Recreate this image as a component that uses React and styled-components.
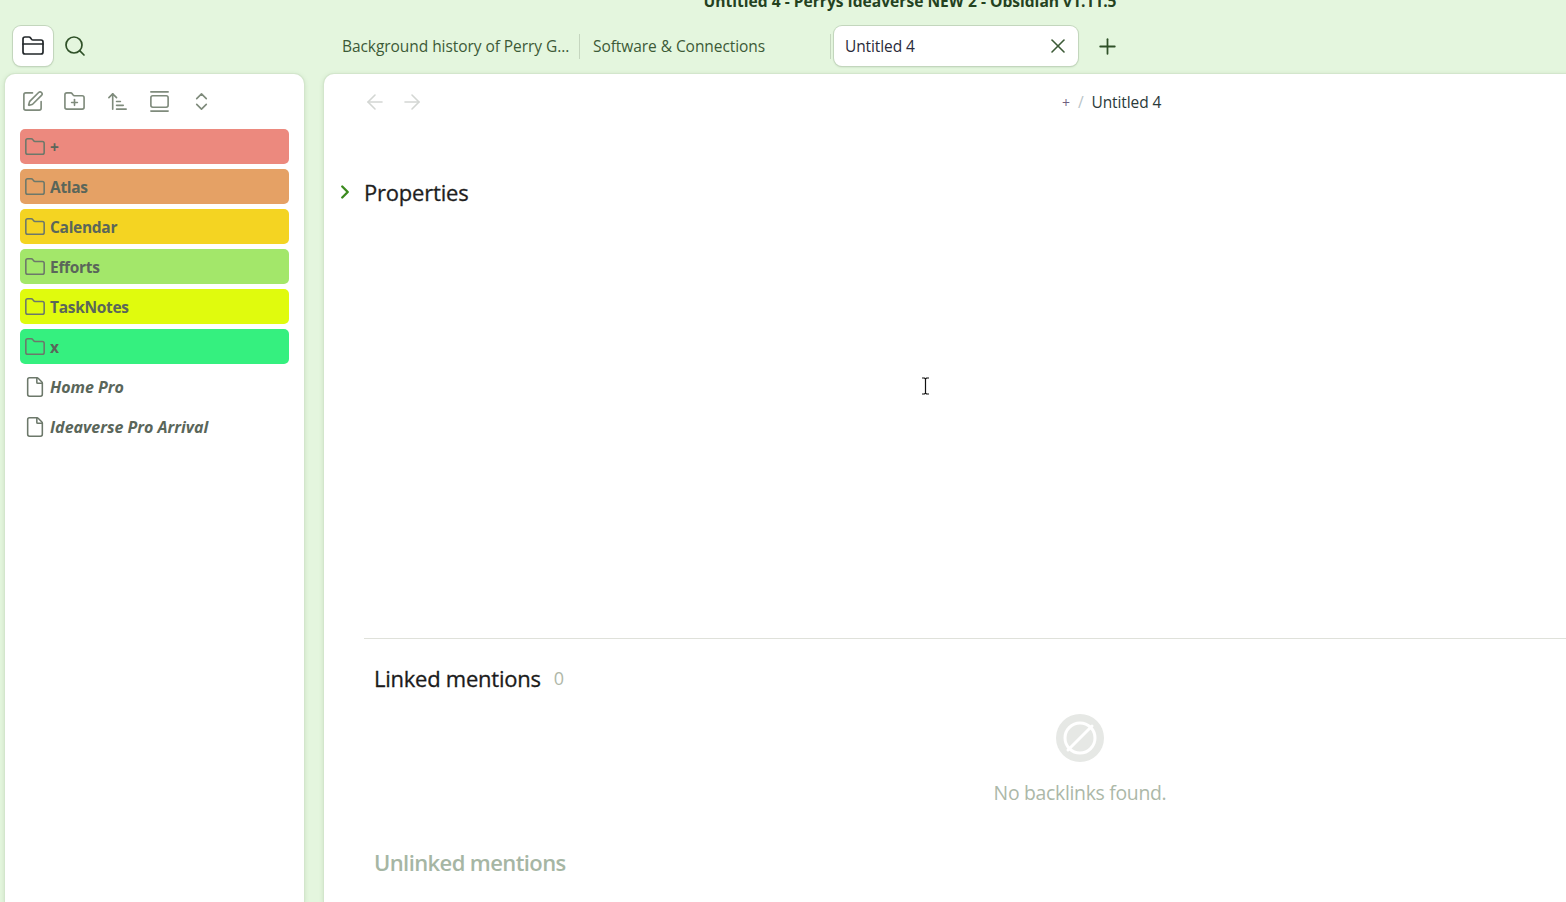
import React from "react";
import styled, { createGlobalStyle } from "styled-components";
import {
  ArrowLeft,
  ArrowRight,
  ArrowUpNarrowWide,
  ChevronRight,
  ChevronsUpDown,
  File,
  Folder,
  FolderClosed,
  FolderPlus,
  GalleryVertical,
  Plus,
  Search,
  SquarePen,
  X,
} from "lucide-react";

const GlobalStyle = createGlobalStyle`
  html, body {
    margin: 0;
    height: 100%;
    overflow: hidden;
    background: #e4f6de;
  }
  body {
    font-family: "Open Sans", "Noto Sans", sans-serif;
  }
`;

const Windows = styled.div`
  position: relative;
  width: 1820px;
  height: 902px;
  overflow: hidden;
  display: grid;
  grid-template-rows: 74px 1fr;
`;

const Header = styled.header`
  position: relative;
  display: flex;
  flex-direction: column;
`;

const WindowTitle = styled.div`
  height: 26px;
  margin-top: -9px;
  margin-bottom: 9px;
  text-align: center;
  font-size: 15.6px;
  line-height: 20px;
  font-weight: 700;
  color: #24421f;
  white-space: nowrap;
`;

const TabBar = styled.div`
  display: flex;
  align-items: center;
  height: 40px;
  padding-left: 13px;
`;

const RibbonButton = styled.button`
  width: 40px;
  height: 40px;
  padding: 0;
  display: flex;
  align-items: center;
  justify-content: center;
  border: none;
  border-radius: 8px;
  background: ${({ $active }) => ($active ? "#fff" : "transparent")};
  box-shadow: ${({ $active }) =>
    $active ? "0 0 0 1px #c3d6bd, 0 1px 2px rgba(60, 90, 50, 0.25)" : "none"};
  color: ${({ $active }) => ($active ? "#22272a" : "#2f5128")};
  margin-right: 2px;
`;

const TabList = styled.div`
  display: flex;
  align-items: center;
  margin-left: 245px;
  height: 40px;
`;

const Tab = styled.div`
  width: ${({ $width }) => $width}px;
  height: 25px;
  box-sizing: border-box;
  padding-left: ${({ $pad }) => $pad}px;
  display: flex;
  align-items: center;
  font-size: 15.5px;
  letter-spacing: -0.06px;
  color: #3c5a37;
  white-space: nowrap;
  border-right: 1px solid #c5d6bf;
`;

const ActiveTab = styled.div`
  width: 244px;
  height: 40px;
  margin-left: 3px;
  padding: 0 8px 0 11px;
  box-sizing: border-box;
  display: flex;
  align-items: center;
  justify-content: space-between;
  background: #fff;
  border-radius: 8px;
  box-shadow: 0 0 0 1px #c3d6bd, 0 1px 2px rgba(60, 90, 50, 0.25);
  font-size: 15.5px;
  letter-spacing: -0.1px;
  color: #2a2a3a;
`;

const CloseIcon = styled(X)`
  color: #3c5a37;
`;

const NewTab = styled.div`
  display: flex;
  align-items: center;
  margin-left: 16.5px;
  color: #2f5128;
`;

const Body = styled.div`
  display: grid;
  grid-template-columns: 299px 1fr;
  column-gap: 20px;
  padding-left: 5px;
  min-height: 0;
`;

const Panel = styled.section`
  background: #fff;
  border-radius: 10px 10px 0 0;
  box-shadow: 0 0 0 1px #d3e6cc, 0 1px 5px rgba(90, 130, 80, 0.28);
  min-width: 0;
`;

const Sidebar = styled(Panel)`
  padding: 0 15px;
`;

const NavButtons = styled.div`
  display: flex;
  align-items: center;
  gap: 19.3px;
  height: 55px;
  padding-left: 1px;
  color: #7f8b7c;
`;

const TreeList = styled.div`
  display: flex;
  flex-direction: column;
  gap: 5px;
`;

const TreeItem = styled.div`
  height: 35px;
  width: 269px;
  box-sizing: border-box;
  border-radius: 5px;
  background: ${({ $color }) => $color || "transparent"};
  display: flex;
  align-items: center;
  padding-left: 4px;
  gap: 4px;
  font-size: ${({ $file }) => ($file ? "16px" : "15.5px")};
  line-height: 20px;
  padding-top: 1px;
  font-weight: 700;
  letter-spacing: ${({ $file }) => ($file ? "0" : "-0.3px")};
  font-style: ${({ $file }) => ($file ? "italic" : "normal")};
  color: #5a665a;
  svg {
    flex: none;
    color: #6c786a;
  }
`;

const Main = styled(Panel)`
  display: flex;
  flex-direction: column;
`;

const ViewHeader = styled.div`
  display: flex;
  align-items: center;
  height: 56px;
  padding-left: 39px;
  gap: 13px;
  color: #d3d6d3;
`;

const Breadcrumb = styled.div`
  margin-left: 625px;
  display: flex;
  align-items: center;
  font-size: 15.5px;
  letter-spacing: -0.1px;
  color: #2a3a3a;
`;

const CrumbParent = styled.span`
  font-size: 14px;
  color: #6f5f80;
`;

const CrumbSep = styled.span`
  margin: 0 8px;
  color: #b8c4c8;
`;

const PropertiesRow = styled.div`
  display: flex;
  align-items: center;
  height: 30px;
  margin-top: 47px;
  padding-left: 10px;
  gap: 8px;
  font-size: 22px;
  letter-spacing: -0.2px;
  -webkit-text-stroke: 0.3px #1e1e1e;
  color: #1e1e1e;
`;

const Chevron = styled(ChevronRight)`
  color: #3b8a1e;
`;

const Backlinks = styled.div`
  margin: 431px 0 0 40px;
  border-top: 1px solid #dfe1da;
  display: flex;
  flex-direction: column;
`;

const PaneHeading = styled.div`
  display: flex;
  align-items: center;
  gap: 13px;
  height: 30px;
  margin: ${({ $top }) => $top}px 0 0 10px;
  font-size: 22px;
  line-height: 30px;
  font-weight: ${({ $muted }) => ($muted ? 600 : 400)};
  letter-spacing: ${({ $muted }) => ($muted ? "-0.6px" : "-0.25px")};
  -webkit-text-stroke: ${({ $muted }) => ($muted ? "0" : "0.3px #1b1b1b")};
  color: ${({ $muted }) => ($muted ? "#a6b6a4" : "#1b1b1b")};
`;

const Count = styled.span`
  font-size: 18px;
  font-weight: 400;
  letter-spacing: 0;
  -webkit-text-stroke: 0;
  color: #b0b8a8;
`;

const EmptyState = styled.div`
  width: 1432px;
  display: flex;
  flex-direction: column;
  align-items: center;
  margin-top: 21px;
`;

const EmptyIcon = styled.svg`
  display: block;
`;

const EmptyText = styled.div`
  margin-top: 17px;
  font-size: 19.4px;
  line-height: 28px;
  letter-spacing: -0.3px;
  color: #acb8a8;
`;

const TextCursor = styled.svg`
  position: absolute;
  left: 921px;
  top: 377px;
`;

const folders = [
  { name: "+", color: "#ec897e" },
  { name: "Atlas", color: "#e5a165" },
  { name: "Calendar", color: "#f4d422" },
  { name: "Efforts", color: "#a3e76a" },
  { name: "TaskNotes", color: "#e0fb0d" },
  { name: "x", color: "#35f07f" },
];

const files = ["Home Pro", "Ideaverse Pro Arrival"];

const App = () => {
  return (
    <Windows>
      <GlobalStyle />
      <Header>
        <WindowTitle>Untitled 4 - Perrys Ideaverse NEW 2 - Obsidian v1.11.5</WindowTitle>
        <TabBar>
          <RibbonButton $active>
            <FolderClosed size={24} strokeWidth={1.7} />
          </RibbonButton>
          <RibbonButton>
            <Search size={24} strokeWidth={1.7} />
          </RibbonButton>
          <TabList>
            <Tab $width={238}>Background history of Perry G...</Tab>
            <Tab $width={251} $pad={13}>Software &amp; Connections</Tab>
            <ActiveTab>
              Untitled 4
              <CloseIcon size={24} strokeWidth={1.6} />
            </ActiveTab>
            <NewTab>
              <Plus size={25} strokeWidth={1.7} />
            </NewTab>
          </TabList>
        </TabBar>
      </Header>
      <Body>
        <Sidebar>
          <NavButtons>
            <SquarePen size={23} strokeWidth={1.7} />
            <FolderPlus size={23} strokeWidth={1.7} />
            <ArrowUpNarrowWide size={23} strokeWidth={1.7} />
            <GalleryVertical size={23} strokeWidth={1.7} />
            <ChevronsUpDown size={23} strokeWidth={1.7} />
          </NavButtons>
          <TreeList>
            {folders.map((folder) => (
              <TreeItem key={folder.name} $color={folder.color}>
                <Folder size={22} strokeWidth={1.7} />
                {folder.name}
              </TreeItem>
            ))}
            {files.map((file) => (
              <TreeItem key={file} $file>
                <File size={22} strokeWidth={1.7} />
                {file}
              </TreeItem>
            ))}
          </TreeList>
        </Sidebar>
        <Main>
          <ViewHeader>
            <ArrowLeft size={24} strokeWidth={1.6} />
            <ArrowRight size={24} strokeWidth={1.6} />
            <Breadcrumb>
              <CrumbParent>+</CrumbParent>
              <CrumbSep>/</CrumbSep>
              Untitled 4
            </Breadcrumb>
          </ViewHeader>
          <PropertiesRow>
            <Chevron size={22} strokeWidth={2.6} />
            Properties
          </PropertiesRow>
          <Backlinks>
            <PaneHeading $top={24}>
              Linked mentions
              <Count>0</Count>
            </PaneHeading>
            <EmptyState>
              <EmptyIcon width="48" height="48" viewBox="0 0 48 48">
                <circle cx="24" cy="24" r="24" fill="#e6e8e5" />
                <circle cx="24" cy="24" r="15" fill="none" stroke="#fff" strokeWidth="3" />
                <line x1="12" y1="36" x2="36" y2="12" stroke="#fff" strokeWidth="3" strokeLinecap="round" />
              </EmptyIcon>
              <EmptyText>No backlinks found.</EmptyText>
            </EmptyState>
            <PaneHeading $top={40} $muted>
              Unlinked mentions
            </PaneHeading>
          </Backlinks>
        </Main>
      </Body>
      <TextCursor width="9" height="18" viewBox="0 0 9 18">
        <path d="M1 1h2.5L4.5 2 5.5 1H8M4.5 2v14M1 17h2.5l1-1 1 1H8" fill="none" stroke="#111" strokeWidth="1.2" />
      </TextCursor>
    </Windows>
  );
};

export default App;
